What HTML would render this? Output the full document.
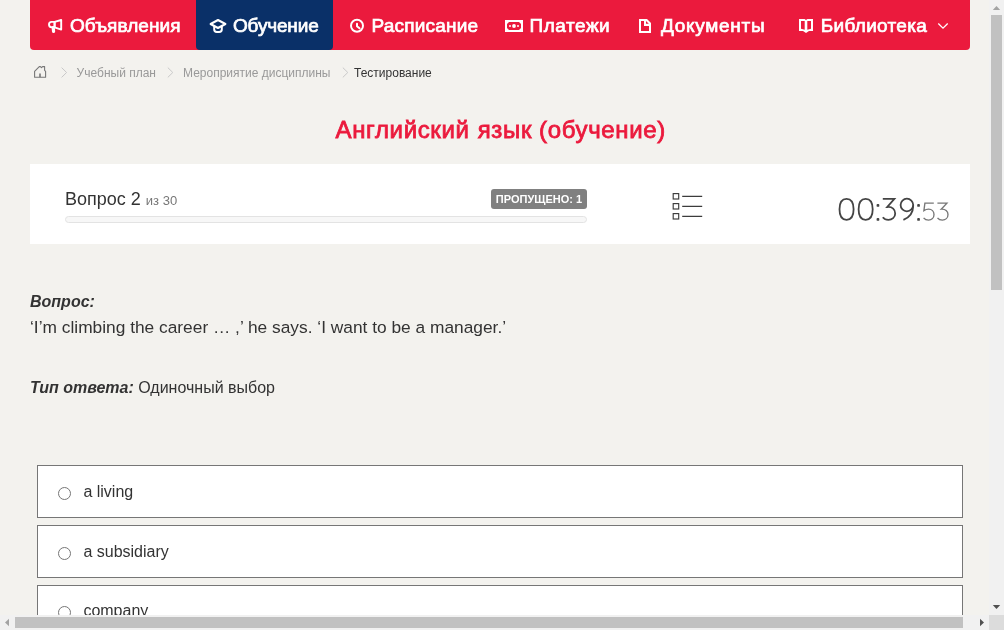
<!DOCTYPE html>
<html lang="ru">
<head>
<meta charset="utf-8">
<title>Тестирование</title>
<style>
  * { box-sizing: border-box; }
  html, body { margin: 0; padding: 0; }
  html { overflow: hidden; }
  body {
    width: 1004px; height: 630px; overflow: hidden; position: relative;
    background: #f3f2ee;
    font-family: "Liberation Sans", sans-serif;
    color: #333;
  }
  #view { position: absolute; left: 0; top: 0; width: 989px; height: 615px; overflow: hidden; will-change: transform; }

  /* ---------- nav ---------- */
  #nav {
    position: absolute; left: 30px; top: 0; width: 940px; height: 50px;
    background: #eb1a3d; border-radius: 0 0 4px 4px;
  }
  #nav .act {
    position: absolute; left: 166px; top: 0; width: 137px; height: 50px;
    background: #0a3068; border-radius: 0 0 4px 4px;
  }
  .ni {
    position: absolute; top: 1px; height: 50px; line-height: 50px;
    color: #fff; font-size: 19px; white-space: nowrap;
    -webkit-text-stroke: 0.7px #fff;
  }
  .nic { position: absolute; }

  /* ---------- breadcrumbs ---------- */
  .bc { position: absolute; top: 66px; height: 14px; line-height: 14px; font-size: 12px; color: #999; white-space: nowrap; }
  .bc.cur { color: #333; }
  .bsep { position: absolute; top: 67px; }

  /* ---------- title ---------- */
  .tw {
    position: absolute; top: 113px;
    font-size: 24px; line-height: 34px; color: #eb1a3d; white-space: nowrap;
    -webkit-text-stroke: 0.8px #eb1a3d;
  }

  /* ---------- status panel ---------- */
  #panel { position: absolute; left: 30px; top: 164px; width: 940px; height: 80px; background: #fff; }
  #qn { position: absolute; left: 35px; top: 24px; font-size: 18px; line-height: 22px; color: #333; white-space: nowrap; }
  #qn small { font-size: 13px; color: #777; }
  #badge {
    position: absolute; left: 461px; top: 25px; width: 96px; height: 20px; border-radius: 3px;
    background: #808080; color: #fff; font-size: 11px; font-weight: bold; line-height: 20px; text-align: center; white-space: nowrap;
  }
  #bar { position: absolute; left: 35px; top: 52px; width: 522px; height: 7px; border: 1px solid #e3e3e3; border-radius: 4px; background: #f7f7f7; }
  #list { position: absolute; left: 642px; top: 29px; }
  #timer { position: absolute; left: 800px; top: 20px; }

  /* ---------- question ---------- */
  .ql { position: absolute; left: 30px; font-size: 16px; line-height: 20px; color: #333; white-space: nowrap; }
  .ql b { font-style: italic; }
  #qt { position: absolute; left: 30px; top: 317px; font-size: 17.33px; line-height: 20px; color: #333; white-space: nowrap; }

  /* ---------- answers ---------- */
  .ans { position: absolute; left: 37px; width: 926px; height: 53px; background: #fff; border: 1px solid #767676; }
  .ans .r { position: absolute; left: 20px; top: 21px; width: 13px; height: 13px; border: 1px solid #767676; border-radius: 50%; background: #fff; }
  .ans .t { position: absolute; left: 45.4px; top: 16px; font-size: 16px; line-height: 20px; color: #333; white-space: nowrap; }

  /* ---------- fake scrollbars ---------- */
  #vs { position: absolute; left: 989px; top: 0; width: 15px; height: 615px; background: #f1f1f1; }
  #vs .th { position: absolute; left: 2px; top: 15px; width: 11px; height: 275px; background: #c1c1c1; }
  #hs { position: absolute; left: 0; top: 615px; width: 989px; height: 15px; background: #f1f1f1; }
  #hs .th { position: absolute; left: 15px; top: 2px; width: 948px; height: 11px; background: #c1c1c1; }
  #corner { position: absolute; left: 989px; top: 615px; width: 15px; height: 15px; background: #dcdcdc; }
  .arr { position: absolute; width: 0; height: 0; border: 4px solid transparent; }
</style>
</head>
<body>
<div id="view">

  <div id="nav">
    <div class="act"></div>
    <span class="ni" style="left:40.0px;letter-spacing:0.06px">Объявления</span>
    <span class="ni" style="left:203.0px;letter-spacing:-0.17px">Обучение</span>
    <span class="ni" style="left:341.5px;letter-spacing:0.2px">Расписание</span>
    <span class="ni" style="left:499.5px;letter-spacing:0.53px">Платежи</span>
    <span class="ni" style="left:631.0px;letter-spacing:0.7px">Документы</span>
    <span class="ni" style="left:790.8px;letter-spacing:0.3px">Библиотека</span>
  </div>

  <span class="bc" style="left:76.6px">Учебный план</span>
  <span class="bc" style="left:183px">Мероприятие дисциплины</span>
  <span class="bc cur" style="left:354px">Тестирование</span>

  <span class="tw" style="left:335.5px;letter-spacing:0.65px">Английский</span>
  <span class="tw" style="left:477.7px;letter-spacing:0.65px">язык</span>
  <span class="tw" style="left:539px;letter-spacing:0.65px">(обучение)</span>

  <div id="panel">
    <div id="qn">Вопрос 2 <small>из 30</small></div>
    <div id="badge">ПРОПУЩЕНО: 1</div>
    <div id="bar"></div>
  </div>

  <div class="ql" style="top:292px"><b>Вопрос:</b></div>
  <div id="qt">‘I’m climbing the career … ,’ he says. ‘I want to be a manager.’</div>
  <div class="ql" style="top:378px"><b>Тип ответа:</b> Одиночный выбор</div>

  <div class="ans" style="top:465px"><span class="r"></span><span class="t">a living</span></div>
  <div class="ans" style="top:525px"><span class="r"></span><span class="t">a subsidiary</span></div>
  <div class="ans" style="top:585px"><span class="r" style="top:20px"></span><span class="t" style="top:15px">company</span></div>

  <svg id="ov" width="989" height="615" viewBox="0 0 989 615" style="position:absolute;left:0;top:0;overflow:visible">
    <!-- megaphone -->
    <g fill="none" stroke="#fff" stroke-width="1.9" stroke-linejoin="round" stroke-linecap="round">
      <path d="M54.6,21.9 H51.6 Q49,21.9 49,24.6 Q49,27.3 51.6,27.3 H54.6 Z"/>
      <path d="M54.6,21.9 L61.2,20 V29.6 L54.6,27.3 Z"/>
      <path d="M53.2,27.6 L53.6,31.5" stroke-width="3.2"/>
    </g>
    <!-- graduation cap -->
    <g fill="none" stroke="#fff" stroke-width="2" stroke-linejoin="round" stroke-linecap="round">
      <path d="M210.6,24 L218,20 L225.4,24 L218,28 Z"/>
      <path d="M214.2,26.6 V29.6 Q214.2,32 216.8,32 H219.2 Q221.8,32 221.8,29.6 V26.6"/>
    </g>
    <!-- clock -->
    <g fill="none" stroke="#fff" stroke-linecap="round" stroke-linejoin="round">
      <circle cx="357" cy="25.8" r="6" stroke-width="2"/>
      <path d="M357,23.7 V26.2 L359.5,28.3" stroke-width="2"/>
    </g>
    <!-- money -->
    <g>
      <rect x="505" y="20" width="18" height="12" fill="#fff"/>
      <path d="M509,22 H519 L521,24 V28 L519,30 H509 L507,28 V24 Z" fill="#eb1a3d"/>
      <circle cx="514" cy="26" r="1.9" fill="#fff"/>
      <rect x="509" y="25" width="2" height="2" fill="#fff" opacity=".75"/>
      <rect x="517" y="25" width="2" height="2" fill="#fff" opacity=".75"/>
    </g>
    <!-- document -->
    <g>
      <path d="M639,19 H647 L651,23 V33 H639 Z" fill="#fff"/>
      <path d="M641,21 H644 V26 H649 V31 H641 Z" fill="#eb1a3d"/>
      <path d="M646,21 L648.8,23.8 H646 Z" fill="#eb1a3d"/>
    </g>
    <!-- book -->
    <g>
      <path d="M799,19 H804.6 L806,20 L807.4,19 H813 V31 H809 L806,33.1 L803,31 H799 Z" fill="#fff"/>
      <path d="M801,21 H804.7 V29.8 L801,28.7 Z" fill="#eb1a3d"/>
      <path d="M807.3,21 H811 V28.7 L807.3,29.8 Z" fill="#eb1a3d"/>
    </g>
    <!-- nav chevron -->
    <path d="M938.3,23.5 L943,28.2 L947.7,23.5" fill="none" stroke="#fff" stroke-width="1.3"/>

    <!-- home -->
    <g fill="none" stroke="#777" stroke-width="1.1" stroke-linejoin="round">
      <path d="M34.6,77.2 V71.3 L39.3,66.6 H40.4 L41.5,67.7 L42.6,66.6 H44.6 V70.3 L45.6,71.3 V77.2 Z"/>
      <path d="M40,77.2 V73.4" stroke-width="1.6"/>
    </g>
    <!-- breadcrumb chevrons -->
    <g fill="none" stroke="#c8c8c8" stroke-width="1">
      <path d="M61.6,67.6 L66.6,72.5 L61.6,77.4"/>
      <path d="M167.8,67.6 L172.8,72.5 L167.8,77.4"/>
      <path d="M342.8,67.6 L347.8,72.5 L342.8,77.4"/>
    </g>

    <!-- list icon -->
    <g fill="none" stroke="#3c3c3c" stroke-width="1.15">
      <rect x="673.2" y="193.6" width="5.5" height="5.4"/>
      <rect x="673.2" y="203.6" width="5.5" height="5.4"/>
      <rect x="673.2" y="213.6" width="5.5" height="5.4"/>
      <path d="M682.2,196.3 H702.2 M682.2,206.3 H702.2 M682.2,216.3 H702.2" stroke-width="1.2"/>
    </g>

    <!-- timer -->
    <g fill="none" stroke="#444" stroke-width="1.8" stroke-linecap="butt" stroke-linejoin="miter">
      <path d="M846.55,198.80 C851.06,198.80 853.60,202.58 853.60,209.3 C853.60,216.02 851.06,219.80 846.55,219.80 C842.04,219.80 839.50,216.02 839.50,209.3 C839.50,202.58 842.04,198.80 846.55,198.80 Z"/>
      <path d="M865.65,198.80 C870.16,198.80 872.70,202.58 872.70,209.3 C872.70,216.02 870.16,219.80 865.65,219.80 C861.14,219.80 858.60,216.02 858.60,209.3 C858.60,202.58 861.14,198.80 865.65,198.80 Z"/>
      <!-- 3 -->
      <path d="M882.8,198.8 H894.4 L887.3,207 C892.4,206.5 895.2,209.6 895.2,213.4 C895.2,217.4 892,219.8 888.4,219.8 C886,219.8 884,218.8 882.8,217.2"/>
      <!-- 9 -->
      <circle cx="906.9" cy="205" r="6.3"/>
      <path d="M913.2,205.4 C913.2,212 909.4,217.4 903.4,219.8"/>
    </g>
    <g fill="#444">
      <rect x="876.6" y="204.1" width="2.7" height="2.7" rx="0.9"/>
      <rect x="876.6" y="218.1" width="2.7" height="2.7" rx="0.9"/>
      <rect x="917.2" y="204.1" width="2.7" height="2.7" rx="0.9"/>
      <rect x="917.2" y="218.1" width="2.7" height="2.7" rx="0.9"/>
    </g>
    <g fill="none" stroke="#777" stroke-width="1.35">
      <!-- 5 -->
      <path d="M933.8,203.1 H924.9 L923.9,210.6 C925.4,209.6 927,209.1 928.6,209.1 C931.8,209.1 934,211.4 934,214.6 C934,217.9 931.6,220.1 928.6,220.1 C926.4,220.1 924.7,219.2 923.6,217.8"/>
      <!-- 3 -->
      <path d="M937.4,203.1 H946.9 L941.2,209.2 C945.4,208.9 948,211.3 948,214.5 C948,217.9 945.4,220.1 942.4,220.1 C940.3,220.1 938.6,219.3 937.5,217.8"/>
    </g>
  </svg>

</div>

<div id="vs"><div class="th"></div></div>
<div id="hs"><div class="th"></div></div>
<div id="corner"></div>
<svg width="1004" height="630" viewBox="0 0 1004 630" style="position:absolute;left:0;top:0;pointer-events:none">
  <path d="M996.5,6 L1000.2,10 H992.8 Z" fill="#a3a3a3"/>
  <path d="M992.8,605 H1000.2 L996.5,609 Z" fill="#505050"/>
  <path d="M5,622.5 L9,618.8 V626.2 Z" fill="#a3a3a3"/>
  <path d="M980,618.8 L984,622.5 L980,626.2 Z" fill="#505050"/>
</svg>
</body>
</html>
